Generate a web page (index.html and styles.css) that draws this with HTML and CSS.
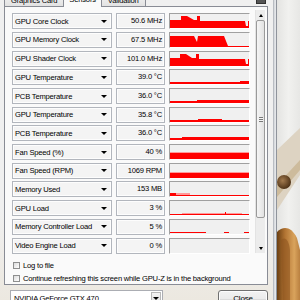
FILE: index.html
```html
<!DOCTYPE html>
<html lang="en">
<head>
    <meta charset="UTF-8">
    <title>GPU-Z Sensors</title>
    <link rel="stylesheet" href="styles.css">
</head>
<body>
    <div class="screen">
        <div class="window">
            <div class="tabstrip">
                <div class="tab">Graphics Card</div>
                <div class="tab active">Sensors</div>
                <div class="tab">Validation</div>
                <div class="camera"></div>
            </div>

            <div class="panel">
                <div class="sensors">
                    <div class="rows">
                        <div class="row">
                            <div class="combo"><span>GPU Core Clock</span><i class="arrow"></i></div>
                            <div class="value">50.6 MHz</div>
                            <div class="graph"><svg viewBox="0 0 79 14" preserveAspectRatio="none"><polygon points="0,14 0,6 11,6 11,2 17,2 24,6 27,6 27,2 30,2 30,7 75,7 76,12 78,12 78,7 79,7 79,14"/></svg></div>
                        </div>
                        <div class="row">
                            <div class="combo"><span>GPU Memory Clock</span><i class="arrow"></i></div>
                            <div class="value">67.5 MHz</div>
                            <div class="graph"><svg viewBox="0 0 79 14" preserveAspectRatio="none"><polygon points="0,14 0,3 24,3 27,9 28,3 54,3 58,13 79,13 79,14"/></svg></div>
                        </div>
                        <div class="row">
                            <div class="combo"><span>GPU Shader Clock</span><i class="arrow"></i></div>
                            <div class="value">101.0 MHz</div>
                            <div class="graph"><svg viewBox="0 0 79 14" preserveAspectRatio="none"><polygon points="0,14 0,6 10,6 10,2 16,2 22,6 26,6 26,2 29,2 29,7 75,7 76,12 78,12 78,7 79,7 79,14"/></svg></div>
                        </div>
                        <div class="row">
                            <div class="combo"><span>GPU Temperature</span><i class="arrow"></i></div>
                            <div class="value">39.0 °C</div>
                            <div class="graph"><svg viewBox="0 0 79 14" preserveAspectRatio="none"><polygon points="0,14 0,12 70,12 70,11 79,11 79,14"/></svg></div>
                        </div>
                        <div class="row">
                            <div class="combo"><span>PCB Temperature</span><i class="arrow"></i></div>
                            <div class="value">36.0 °C</div>
                            <div class="graph"><svg viewBox="0 0 79 14" preserveAspectRatio="none"><polygon points="0,14 0,12 27,12 27,11 79,11 79,14"/></svg></div>
                        </div>
                        <div class="row">
                            <div class="combo"><span>GPU Temperature</span><i class="arrow"></i></div>
                            <div class="value">35.8 °C</div>
                            <div class="graph"><svg viewBox="0 0 79 14" preserveAspectRatio="none"><polygon points="0,14 0,12 28,12 28,11 52,11 52,12 79,12 79,14"/></svg></div>
                        </div>
                        <div class="row">
                            <div class="combo"><span>PCB Temperature</span><i class="arrow"></i></div>
                            <div class="value">36.0 °C</div>
                            <div class="graph"><svg viewBox="0 0 79 14" preserveAspectRatio="none"><polygon points="0,14 0,12 12,12 12,11 79,11 79,14"/></svg></div>
                        </div>
                        <div class="row">
                            <div class="combo"><span>Fan Speed (%)</span><i class="arrow"></i></div>
                            <div class="value">40 %</div>
                            <div class="graph"><svg viewBox="0 0 79 14" preserveAspectRatio="none"><rect class="soft" x="0" y="7" width="79" height="1"/><polygon points="0,14 0,8 79,8 79,14"/></svg></div>
                        </div>
                        <div class="row">
                            <div class="combo"><span>Fan Speed (RPM)</span><i class="arrow"></i></div>
                            <div class="value">1069 RPM</div>
                            <div class="graph"><svg viewBox="0 0 79 14" preserveAspectRatio="none"><rect class="soft" x="0" y="8" width="79" height="1"/><polygon points="0,14 0,9 79,9 79,14"/></svg></div>
                        </div>
                        <div class="row">
                            <div class="combo"><span>Memory Used</span><i class="arrow"></i></div>
                            <div class="value">153 MB</div>
                            <div class="graph"><svg viewBox="0 0 79 14" preserveAspectRatio="none"><rect class="soft" x="6" y="11" width="14" height="2"/><polygon points="0,14 0,11 6,11 6,13 79,13 79,14"/></svg></div>
                        </div>
                        <div class="row">
                            <div class="combo"><span>GPU Load</span><i class="arrow"></i></div>
                            <div class="value">3 %</div>
                            <div class="graph"><svg viewBox="0 0 79 14" preserveAspectRatio="none"><rect class="soft" x="12" y="12" width="60" height="1"/><polygon points="0,14 0,13 55,13 55,11 56,11 56,13 79,13 79,14"/></svg></div>
                        </div>
                        <div class="row">
                            <div class="combo"><span>Memory Controller Load</span><i class="arrow"></i></div>
                            <div class="value">5 %</div>
                            <div class="graph"><svg viewBox="0 0 79 14" preserveAspectRatio="none"><rect x="0" y="12" width="36" height="1"/><rect x="54" y="12" width="5" height="1"/><rect x="74" y="12" width="5" height="1"/></svg></div>
                        </div>
                        <div class="row">
                            <div class="combo"><span>Video Engine Load</span><i class="arrow"></i></div>
                            <div class="value">0 %</div>
                            <div class="graph"></div>
                        </div>
                    </div>

                    <div class="scrollbar">
                        <div class="scroll-btn"><i class="arrow up"></i></div>
                        <div class="thumb"><span class="grip"></span></div>
                        <div class="track"></div>
                        <div class="scroll-btn"><i class="arrow"></i></div>
                    </div>
                </div>

                <label class="check"><span class="box"></span>Log to file</label>
                <label class="check"><span class="box"></span>Continue refreshing this screen while GPU-Z is in the background</label>
            </div>

            <div class="footer">
                <div class="select">
                    <span>NVIDIA GeForce GTX 470</span>
                    <span class="select-btn"><i class="arrow"></i></span>
                </div>
                <div class="button">Close</div>
            </div>
        </div>

        <div class="frame"></div>

        <div class="wallpaper">
            <svg width="23" height="300" viewBox="0 0 23 300">
                <defs>
                    <linearGradient id="wall" x1="0" y1="0" x2="1" y2="0">
                        <stop offset="0" stop-color="#e4e4e2"/>
                        <stop offset="0.5" stop-color="#f1f1ef"/>
                        <stop offset="1" stop-color="#e7e7e5"/>
                    </linearGradient>
                    <linearGradient id="wood" x1="0" y1="0" x2="1" y2="0">
                        <stop offset="0" stop-color="#6b3f12"/>
                        <stop offset="0.35" stop-color="#b27433"/>
                        <stop offset="0.75" stop-color="#d9a35c"/>
                        <stop offset="1" stop-color="#b98040"/>
                    </linearGradient>
                    <radialGradient id="knob" cx="0.4" cy="0.4" r="0.6">
                        <stop offset="0" stop-color="#a27a4e"/>
                        <stop offset="1" stop-color="#4f3317"/>
                    </radialGradient>
                </defs>
                <rect width="23" height="300" fill="url(#wall)"/>
                <path d="M0 150 L23 128 L23 175 L0 210 Z" fill="#ddd3c2"/>
                <path d="M0 185 L23 160 L23 170 L0 197 Z" fill="#cdbb9c"/>
                <circle cx="7" cy="182" r="7" fill="url(#knob)"/>
                <path d="M0 232 C6 226 14 226 20 238 L23 250 L23 300 L0 300 Z" fill="url(#wood)"/>
                <path d="M4 240 C8 236 12 240 13 250 L13 300 L6 300 Z" fill="#8d5520" opacity="0.6"/>
            </svg>
        </div>
    </div>
</body>
</html>
```

FILE: styles.css
```css
* {
    box-sizing: border-box;
}
html, body {
    margin: 0;
}
body {
    width: 300px;
    height: 300px;
    overflow: hidden;
    font-family: "Liberation Sans", Arial, sans-serif;
    font-size: 7.6px;
    letter-spacing: -0.2px;
    color: #000;
    background: #ebebe9;
}
.screen {
    display: flex;
    height: 300px;
}
.window {
    width: 273px;
    flex: none;
    background: linear-gradient(#f0f0f0 70%, #ece8e0);
    padding: 0 5px 0 4px;
    display: flex;
    flex-direction: column;
}
.frame {
    width: 4px;
    flex: none;
    background: linear-gradient(to right, #d4d7db, #e9ebee);
    border-left: 1px solid #b9bdc3;
    border-right: 1px solid #8f949c;
}
.wallpaper {
    flex: 1;
}
.wallpaper svg {
    display: block;
}

/* tabs */
.tabstrip {
    height: 6px;
    display: flex;
    align-items: flex-end;
}
.tab {
    height: 12px;
    line-height: 12px;
    padding: 0 6px;
    border: 1px solid #898c95;
    border-bottom: none;
    background: linear-gradient(#f2f2f2, #e2e2e2);
    white-space: nowrap;
}
.tab + .tab {
    margin-left: -1px;
}
.tab.active {
    position: relative;
    z-index: 1;
    height: 15px;
    line-height: 14px;
    margin-bottom: -1px;
    padding: 0 5px;
    background: #fafafa;
}
.camera {
    margin-left: auto;
    margin-right: 2px;
    margin-bottom: 2px;
    width: 10px;
    height: 4px;
    background: #555;
    border: 1px solid #333;
    border-top: none;
}

/* panel */
.panel {
    height: 279px;
    border: 1px solid #898c95;
    background: #fafafa;
    padding: 3px 2px 0 7px;
}
.sensors {
    display: flex;
    gap: 5px;
}
.rows {
    width: 238px;
    margin-top: 3.3px;
    display: flex;
    flex-direction: column;
    gap: 2.7px;
}
.row {
    display: flex;
    gap: 4px;
    height: 16px;
}
.combo {
    width: 100px;
    border: 1px solid #b2b6bd;
    background: #f4f4f4;
    box-shadow: inset 0 0 0 1px #fdfdfd;
    display: flex;
    align-items: center;
    justify-content: space-between;
    padding: 0 4px 0 2px;
    white-space: nowrap;
}
.arrow {
    width: 0;
    height: 0;
    border-left: 3px solid transparent;
    border-right: 3px solid transparent;
    border-top: 3px solid #000;
}
.arrow.up {
    border-top: none;
    border-bottom: 3px solid #000;
}
.value {
    width: 49px;
    border: 1px solid #b2b6bd;
    background: #f4f4f4;
    box-shadow: inset 0 0 0 1px #fdfdfd;
    text-align: right;
    line-height: 14px;
    padding-right: 2px;
    white-space: nowrap;
}
.graph {
    width: 81px;
    border: 1px solid;
    border-color: #a0a0a0 #ffffff #ffffff #a0a0a0;
    background: #f0f0f0;
}
.graph svg {
    display: block;
    width: 79px;
    height: 14px;
    fill: #ff0000;
}
.graph .soft {
    fill: #ff9a9a;
}

/* scrollbar */
.scrollbar {
    width: 10px;
    height: 243px;
    display: flex;
    flex-direction: column;
    background: #ececec;
    border-left: 1px solid #e3e3e3;
}
.scroll-btn {
    height: 10px;
    display: flex;
    align-items: center;
    justify-content: center;
}
.scroll-btn .arrow {
    border-left-width: 2.5px;
    border-right-width: 2.5px;
}
.thumb {
    height: 198px;
    border: 1px solid #9a9a9a;
    border-radius: 2px;
    background: linear-gradient(to right, #f5f5f5, #e2e2e2);
    display: flex;
    align-items: center;
    justify-content: center;
}
.grip {
    width: 4px;
    height: 5px;
    border-top: 1px solid #777;
    border-bottom: 1px solid #777;
    background: linear-gradient(#f5f5f5 40%, #777 40%, #777 60%, #f5f5f5 60%);
}
.track {
    flex: 1;
}

/* checkboxes */
.check {
    display: flex;
    align-items: center;
    gap: 3px;
    height: 13px;
    padding-left: 1px;
    white-space: nowrap;
}
.sensors + .check {
    margin-top: 5px;
}
.box {
    width: 7px;
    height: 7px;
    border: 1px solid #8e8f8f;
    background: linear-gradient(135deg, #dcdcdc, #ffffff);
}

/* footer */
.footer {
    display: flex;
    justify-content: space-between;
    align-items: flex-start;
    padding: 5px 0 0 6px;
}
.select {
    width: 153px;
    height: 16px;
    border: 1px solid #abadb3;
    background: #fff;
    display: flex;
    align-items: center;
    justify-content: space-between;
    padding: 0 1px 0 3px;
}
.select-btn {
    width: 10px;
    height: 12px;
    border: 1px solid #b8b8b8;
    background: linear-gradient(#f4f4f4, #dedede);
    display: flex;
    align-items: center;
    justify-content: center;
}
.button {
    width: 50px;
    height: 17px;
    border: 1px solid #707070;
    border-radius: 3px;
    background: linear-gradient(#f2f2f2 0%, #ebebeb 50%, #dddddd 50%, #cfcfcf 100%);
    box-shadow: inset 0 0 0 1px #fcfcfc;
    text-align: center;
    line-height: 15px;
    font-size: 8px;
}
```
